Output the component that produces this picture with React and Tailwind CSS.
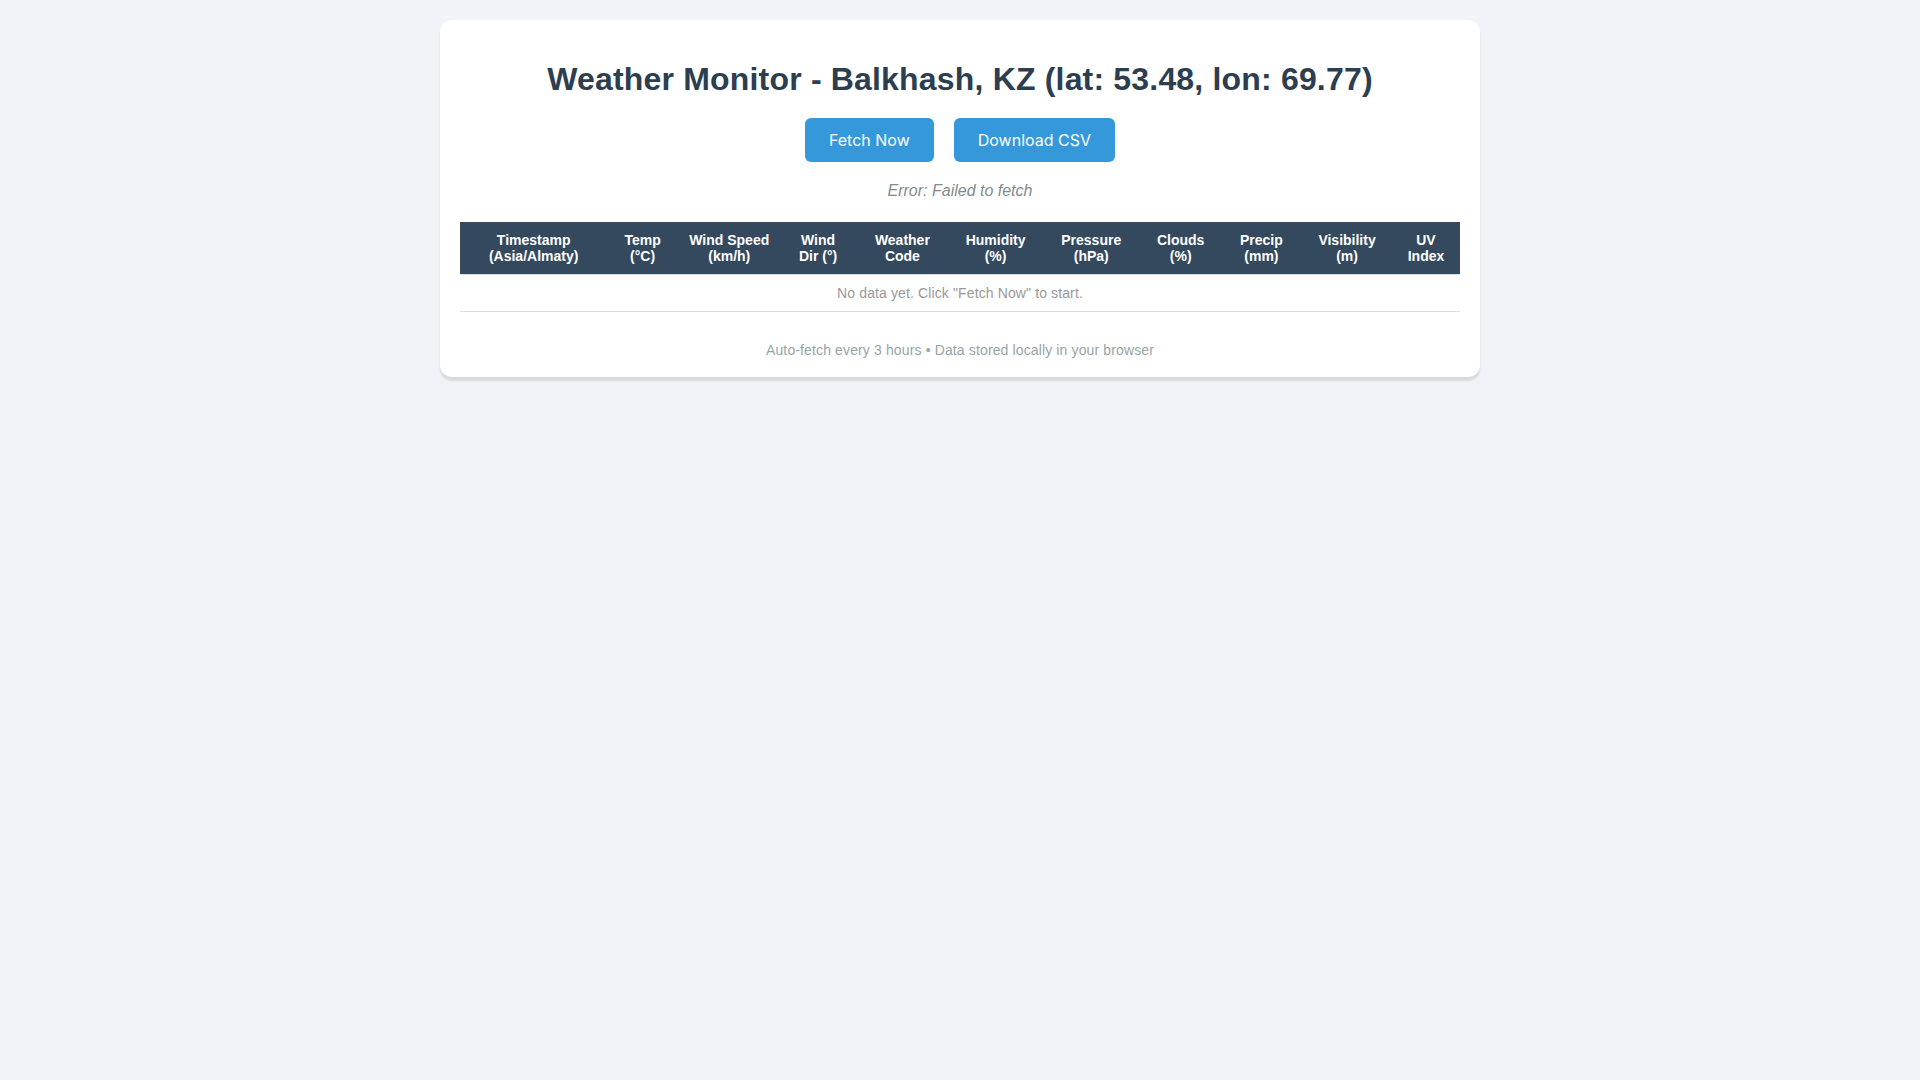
export default function App() {
  const headers = [
    ["Timestamp", "(Asia/Almaty)"],
    ["Temp", "(°C)"],
    ["Wind Speed", "(km/h)"],
    ["Wind", "Dir (°)"],
    ["Weather", "Code"],
    ["Humidity", "(%)"],
    ["Pressure", "(hPa)"],
    ["Clouds", "(%)"],
    ["Precip", "(mm)"],
    ["Visibility", "(m)"],
    ["UV", "Index"],
  ];
  return (
    <div className="min-h-screen bg-[#f0f4f8] py-[20px] font-['Liberation_Sans',Arial,sans-serif]">
      <div className="w-[1040px] mx-auto bg-white rounded-[12px] px-[20px] pt-[20px] pb-[19px] shadow-[0_4px_2px_rgba(0,0,0,0.1)]">
        <h1 className="mt-[21px] text-center text-[32px] leading-[37px] font-bold tracking-[0.18px] text-[#2c3e50]">
          Weather Monitor - Balkhash, KZ (lat: 53.48, lon: 69.77)
        </h1>
        <div className="mt-[20px] flex justify-center gap-[20px]">
          <button className="h-[44px] px-[24px] rounded-[6px] bg-[#3498db] text-white text-[16px] font-['Inter',sans-serif]">
            Fetch Now
          </button>
          <button className="h-[44px] px-[24px] rounded-[6px] bg-[#3498db] text-white text-[16px] font-['Inter',sans-serif]">
            Download CSV
          </button>
        </div>
        <p className="mt-[20px] text-center italic text-[16px] leading-[18px] text-[#7f8c8d]">
          Error: Failed to fetch
        </p>
        <table className="mt-[22px] w-full border-collapse">
          <thead>
            <tr>
              {headers.map((h, i) => (
                <th
                  key={i}
                  className="bg-[#34495e] text-white font-bold text-[14px] leading-[16px] p-[10px] text-center border-b border-[#ddd]"
                >
                  {h[0]} {h[1]}
                </th>
              ))}
            </tr>
          </thead>
          <tbody>
            <tr>
              <td
                colSpan={11}
                className="p-[10px] text-center text-[14px] leading-[16px] tracking-[0.12px] text-[#999] border-b border-[#ddd]"
              >
                No data yet. Click "Fetch Now" to start.
              </td>
            </tr>
          </tbody>
        </table>
        <div className="mt-[30px] text-center text-[14px] leading-[16px] tracking-[0.13px] text-[#95a5a6]">
          Auto-fetch every 3 hours • Data stored locally in your browser
        </div>
      </div>
    </div>
  );
}
